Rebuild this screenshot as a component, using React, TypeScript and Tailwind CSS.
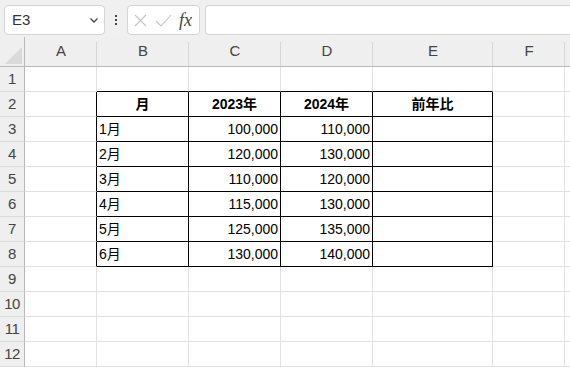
import React from "react";

const cols = [
  { label: "A", w: 72 },
  { label: "B", w: 92 },
  { label: "C", w: 92 },
  { label: "D", w: 92 },
  { label: "E", w: 120 },
  { label: "F", w: 72 },
  { label: "", w: 40 },
];

type Cell = { t: string; align?: "l" | "r" | "c"; bold?: boolean };

const data: Record<number, Record<number, Cell>> = {
  2: {
    1: { t: "月", align: "c", bold: true },
    2: { t: "2023年", align: "c", bold: true },
    3: { t: "2024年", align: "c", bold: true },
    4: { t: "前年比", align: "c", bold: true },
  },
};
const rowsData = [
  ["1月", "100,000", "110,000"],
  ["2月", "120,000", "130,000"],
  ["3月", "110,000", "120,000"],
  ["4月", "115,000", "130,000"],
  ["5月", "125,000", "135,000"],
  ["6月", "130,000", "140,000"],
];
rowsData.forEach((r, i) => {
  data[i + 3] = {
    1: { t: r[0], align: "l" },
    2: { t: r[1], align: "r" },
    3: { t: r[2], align: "r" },
    4: { t: "", align: "l" },
  };
});

const inTable = (r: number, c: number) => r >= 2 && r <= 8 && c >= 1 && c <= 4;

export default function App() {
  const font = { fontFamily: '"Liberation Sans", "Noto Sans CJK JP", sans-serif' };
  return (
    <div className="w-[570px] h-[367px] overflow-hidden bg-white text-[14px]" style={font}>
      {/* toolbar */}
      <div className="h-[37px] bg-[#f0f0f0] flex items-start pt-[5px] pl-[4px]">
        <div className="w-[101px] h-[30px] bg-white border border-[#d4d4d4] rounded-[4px] flex items-center justify-between pl-[7px] pr-[4px] text-[#333] text-[15px]">
          <span>E3</span>
          <svg width="12" height="12" viewBox="0 0 12 12" fill="none" stroke="#444" strokeWidth="1.3">
            <path d="M2.5 4.5 L6 8 L9.5 4.5" />
          </svg>
        </div>
        <div className="w-[22px] h-[30px] flex flex-col items-center justify-center gap-[2px]">
          <div className="w-[2px] h-[2px] bg-[#444]" />
          <div className="w-[2px] h-[2px] bg-[#444]" />
          <div className="w-[2px] h-[2px] bg-[#444]" />
        </div>
        <div className="w-[73px] h-[30px] bg-white border border-[#d4d4d4] rounded-[4px] flex items-center pl-[5px] gap-[7px]">
          <svg width="15" height="15" viewBox="0 0 15 15" fill="none" stroke="#c4c4c4" strokeWidth="1.1">
            <path d="M2 2 L13 13 M13 2 L2 13" />
          </svg>
          <svg width="17" height="15" viewBox="0 0 17 15" fill="none" stroke="#c4c4c4" strokeWidth="1.1">
            <path d="M1 8 L6 13 L16 2" />
          </svg>
          <span className="text-[#444] italic text-[18px] leading-none" style={{ fontFamily: '"Liberation Serif", serif' }}>
            fx
          </span>
        </div>
        <div className="ml-[5px] flex-1 h-[30px] bg-white border border-[#d4d4d4] border-r-0 rounded-l-[4px]" />
      </div>

      {/* column header */}
      <div className="flex h-[30px] bg-[#efefef] border-b border-[#b8b8b8] text-[15px]">
        <div className="w-[25px] h-full border-r border-[#b8b8b8] relative shrink-0">
          <div className="absolute right-[2px] bottom-[2px] w-0 h-0 border-l-[17px] border-l-transparent border-b-[17px] border-b-[#dadada]" />
        </div>
        {cols.map((c, i) => (
          <div
            key={i}
            className="h-full shrink-0 flex items-center justify-center text-[#444] relative"
            style={{ width: c.w }}
          >
            {c.label}
            <div className="absolute right-0 bottom-0 h-[24px] w-px bg-[#d6d6d6]" />
          </div>
        ))}
      </div>

      {/* rows */}
      {Array.from({ length: 12 }, (_, ri) => {
        const r = ri + 1;
        return (
          <div key={r} className="flex h-[25px]">
            <div className="w-[25px] shrink-0 bg-[#efefef] border-r border-b border-r-[#b8b8b8] border-b-[#dcdcdc] flex items-center justify-center text-[#444] text-[15px] tracking-[-0.5px]">
              {r}
            </div>
            {cols.map((c, ci) => {
              const cell = data[r]?.[ci];
              const rightBlack = inTable(r, ci) || inTable(r, ci + 1);
              const bottomBlack = inTable(r, ci) || inTable(r + 1, ci);
              const cls = [
                "shrink-0 h-full border-r border-b flex items-center px-[2px] text-black whitespace-nowrap overflow-hidden",
                rightBlack ? "border-r-black" : "border-r-[#e1e1e1]",
                bottomBlack ? "border-b-black" : "border-b-[#e1e1e1]",
                cell?.align === "r" ? "justify-end" : cell?.align === "c" ? "justify-center" : "justify-start",
                cell?.bold ? "font-bold" : "",
              ].join(" ");
              return (
                <div key={ci} className={cls} style={{ width: c.w }}>
                  {cell?.t}
                </div>
              );
            })}
          </div>
        );
      })}
    </div>
  );
}
